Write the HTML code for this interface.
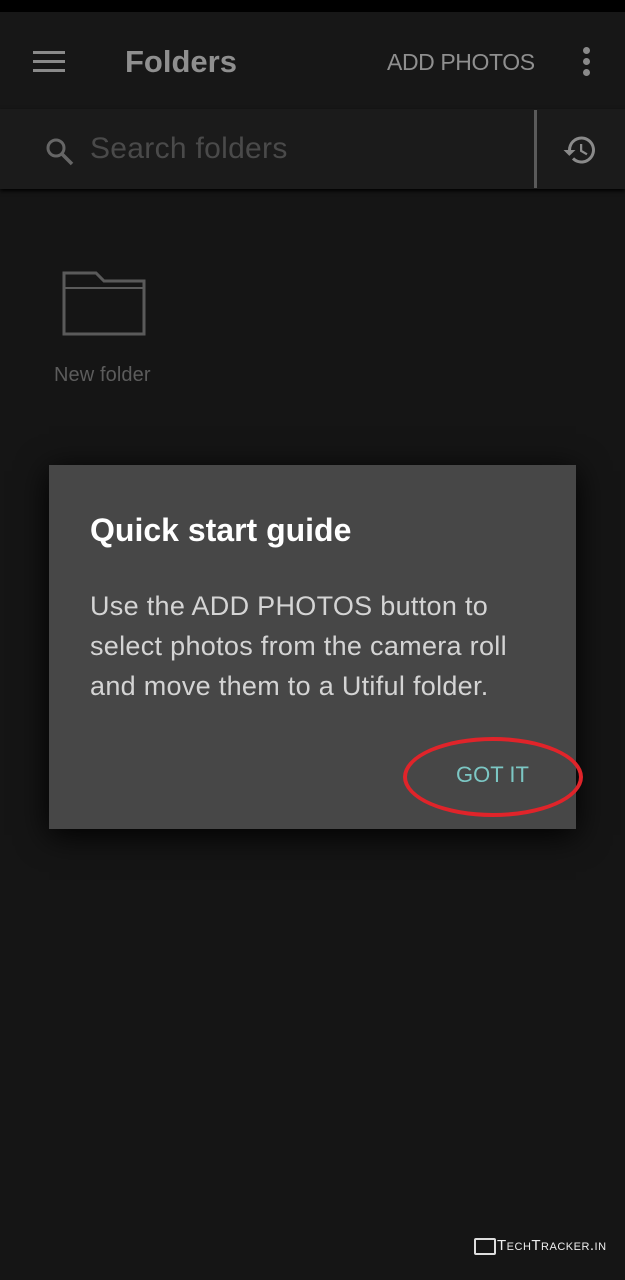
<!DOCTYPE html>
<html><head><style>
body{margin:0;width:625px;height:1280px;background:#151515;font-family:"Liberation Sans",sans-serif;position:relative;overflow:hidden}
.a{position:absolute}
</style></head><body>
<div class="a" style="left:0;top:0;width:625px;height:12px;background:#000"></div>
<div class="a" style="left:0;top:12px;width:625px;height:97px;background:#171717"></div>
<div class="a" style="left:33px;top:51px;width:32px;height:3px;background:#8a8a8a;box-shadow:0 9px 0 #8a8a8a,0 18px 0 #8a8a8a"></div>
<div class="a" style="left:125px;top:44px;font-size:31px;color:#8f8f8f;font-weight:bold">Folders</div>
<div class="a" style="left:387px;top:49px;font-size:23px;color:#8f8f8f;letter-spacing:-0.4px">ADD PHOTOS</div>
<div class="a" style="left:583px;top:47px;width:7px;height:7px;border-radius:50%;background:#8a8a8a;box-shadow:0 11px 0 #8a8a8a,0 22px 0 #8a8a8a"></div>
<div class="a" style="left:0;top:109px;width:625px;height:80px;background:#1b1b1b;box-shadow:0 2px 4px #000"></div>
<svg class="a" style="left:43px;top:135px" width="32" height="32" viewBox="0 0 32 32"><circle cx="13" cy="13" r="8" fill="none" stroke="#666" stroke-width="3"/><line x1="19" y1="19" x2="29" y2="29" stroke="#666" stroke-width="3.5"/></svg>
<div class="a" style="left:90px;top:132px;font-size:30px;color:#4a4a4a;letter-spacing:0.3px">Search folders</div>
<div class="a" style="left:534px;top:110px;width:3px;height:78px;background:#5a5a5a"></div>
<svg class="a" style="left:562px;top:132px" width="36" height="36" viewBox="0 0 24 24"><path d="M13 3a9 9 0 0 0-9 9H1l3.9 3.9L9 12H6a7 7 0 1 1 2.05 4.95l-1.42 1.42A9 9 0 1 0 13 3zm-1 5v5l4.25 2.52.77-1.28-3.52-2.09V8z" fill="#8a8a8a"/></svg>
<svg class="a" style="left:62px;top:270px" width="84" height="66" viewBox="0 0 84 66"><path d="M2 3h32l8 8h40v53H2z" fill="none" stroke="#5a5a5a" stroke-width="3"/><line x1="2" y1="18" x2="82" y2="18" stroke="#5a5a5a" stroke-width="2"/></svg>
<div class="a" style="left:54px;top:364px;font-size:20px;color:#5c5c5c;letter-spacing:0.1px">New folder</div>
<div class="a" style="left:49px;top:465px;width:527px;height:364px;background:#474747;box-shadow:0 6px 30px #000"></div>
<div class="a" style="left:90px;top:512px;font-size:32px;color:#fff;font-weight:bold">Quick start guide</div>
<div class="a" style="left:90px;top:586px;font-size:27px;line-height:40px;color:#d4d4d4;width:480px;letter-spacing:0.3px;white-space:nowrap">Use the ADD PHOTOS button to<br>select photos from the camera roll<br>and move them to a Utiful folder.</div>
<div class="a" style="left:456px;top:762px;font-size:22px;color:#7cc7c4">GOT IT</div>
<div class="a" style="left:403px;top:737px;width:172px;height:72px;border:4px solid #e0242a;border-radius:50%"></div>
<div class="a" style="left:474px;top:1238px;width:18px;height:13px;border:2px solid #ddd;border-radius:2px"></div>
<div class="a" style="left:497px;top:1237px;font-size:15px;color:#eee;font-variant:small-caps;letter-spacing:0.5px">TechTracker.in</div>
</body></html>
